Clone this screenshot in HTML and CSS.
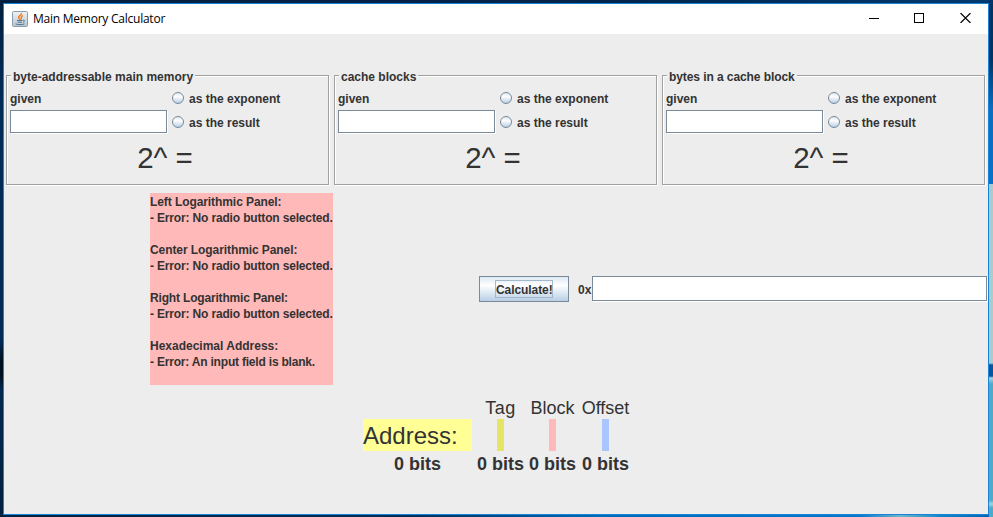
FILE: index.html
```html
<!DOCTYPE html>
<html lang="en">
<head>
<meta charset="utf-8">
<title>Main Memory Calculator</title>
<link rel="stylesheet" href="styles.css">
</head>
<body>
<div class="window">
  <header class="titlebar">
    <svg class="app-icon" width="16" height="16" viewBox="0 0 16 16">
      <defs><linearGradient id="tile" x2="0" y2="1"><stop stop-color="#eff3f6"/><stop offset="1" stop-color="#b7c5ce"/></linearGradient></defs>
      <rect x=".5" y=".5" width="15" height="15" rx="1" fill="url(#tile)" stroke="#8b9ba7"/>
      <path d="M9.500 2C10 4 6.300 4.500 6.600 6.500C7 7.500 8 8 7.800 9M10.800 4.500C8 6 10 7 8.800 8.500" fill="none" stroke="#f08122" stroke-width="1.500"/>
      <path d="M5 9.500H10.500M5.500 11.200H10M11 9.200C13.500 9 12.500 11 11 11.200M3.500 12.800C5 13.900 11 13.900 12.500 12.800" fill="none" stroke="#537591" stroke-width="1"/>
    </svg>
    <span class="title">Main Memory Calculator</span>
    <svg class="controls" width="102" height="10" viewBox="0 0 102 10" fill="none" stroke="#000" shape-rendering="crispEdges">
      <path d="M0 5.500H10M45.500 .5H54.500V9.500H45.500Z"/>
      <path d="M91.500 0L101.500 10M101.500 0L91.500 10" stroke-width="1.200" shape-rendering="auto"/>
    </svg>
  </header>
  <main>
    <div class="panels">
      <section class="panel">
        <h2 class="legend"><span>byte-addressable main memory</span></h2>
        <div class="fields">
          <label class="given">given</label>
          <label class="option"><i class="radio"></i><span>as the exponent</span></label>
          <input class="field" type="text">
          <label class="option"><i class="radio"></i><span>as the result</span></label>
        </div>
        <div class="power">2^ =</div>
      </section>
      <section class="panel">
        <h2 class="legend"><span>cache blocks</span></h2>
        <div class="fields">
          <label class="given">given</label>
          <label class="option"><i class="radio"></i><span>as the exponent</span></label>
          <input class="field" type="text">
          <label class="option"><i class="radio"></i><span>as the result</span></label>
        </div>
        <div class="power">2^ =</div>
      </section>
      <section class="panel">
        <h2 class="legend"><span class="tight">bytes in a cache block</span></h2>
        <div class="fields">
          <label class="given">given</label>
          <label class="option"><i class="radio"></i><span>as the exponent</span></label>
          <input class="field" type="text">
          <label class="option"><i class="radio"></i><span>as the result</span></label>
        </div>
        <div class="power">2^ =</div>
      </section>
    </div>
    <div class="middle">
      <div class="errors">
        <p><span class="tight">Left Logarithmic Panel:</span><br><span class="err">- Error: No radio button selected.</span></p>
        <p><span class="tight">Center Logarithmic Panel:</span><br><span class="err">- Error: No radio button selected.</span></p>
        <p><span class="tighter">Right Logarithmic Panel:</span><br><span class="err">- Error: No radio button selected.</span></p>
        <p><span>Hexadecimal Address:</span><br><span class="err-hex">- Error: An input field is blank.</span></p>
      </div>
      <div class="calc">
        <button class="button"><span>Calculate!</span></button>
        <label class="prefix">0x</label>
        <input class="field hex" type="text">
      </div>
    </div>
    <div class="address">
      <span></span>
      <span class="name tag-name">Tag</span>
      <span class="name">Block</span>
      <span class="name">Offset</span>
      <span class="addr">Address:</span>
      <i class="bar tag"></i>
      <i class="bar block"></i>
      <i class="bar offset"></i>
      <b>0 bits</b>
      <b>0 bits</b>
      <b>0 bits</b>
      <b>0 bits</b>
    </div>
  </main>
</div>
</body>
</html>
```
FILE: styles.css
```css
* { box-sizing: border-box; }
body {
  margin: 0;
  padding: 3px 0 0 3px;
  width: 993px;
  height: 517px;
  overflow: hidden;
  font: bold 12px/16px "Liberation Sans", Arial, sans-serif;
  color: #333;
  background:
    linear-gradient(#003566 0 60px, #0d6fc0 110px, #0871c8 184px, #a8cdd0 184px, #a8cdd0 363px, #06559d 365px, #06559d 376px, #a8d4dc 378px, #4fa9c8 384px, #4fa9c8 500px, #a8d4dc 504px, #4fa9c8 508px) right / 4px 100% no-repeat,
    linear-gradient(90deg, #01203f 0, #01244a 600px, #003a70) top / 100% 3px no-repeat,
    linear-gradient(90deg, #00213f 0, #002b55 400px, #006bb5 600px, #0878c8 860px, #70b5cc 900px, #1287c8 940px, #0561b0) bottom / 100% 2px no-repeat,
    linear-gradient(#001f3f 0, #002c58 100px, #002b55 340px, #001020 360px, #001020 375px, #00284e 390px, #00213f);
}
p, h2 { margin: 0; font: inherit; }
.window {
  width: 986px;
  height: 512px;
  border: 1px solid #1883d7;
  background: #ededed;
}
.titlebar {
  display: flex;
  align-items: center;
  height: 30px;
  padding: 0 17px 0 8px;
  background: #fff;
}
.app-icon { margin-top: -1px; }
.title {
  margin-left: 5px;
  font: 12px/16px "Open Sans", "Noto Sans", sans-serif;
  letter-spacing: -.24px;
  color: #000;
}
.controls { margin-left: auto; margin-top: -2px; }
.panels { display: flex; gap: 5px; padding: 41px 0 0 2px; }
.panel {
  width: 323px;
  height: 110px;
  border: 1px solid #a0a0a0;
  box-shadow: 1px 1px 0 #fff, inset 1px 1px 0 #fff;
}
.legend { height: 16px; margin-top: -8px; padding-left: 4px; }
.legend span {
  display: inline-block;
  height: 16px;
  padding: 1px 2px 0;
  background: #ededed;
}
.tight { letter-spacing: -.08px; }
.tighter { letter-spacing: -.17px; }
.err { letter-spacing: -.16px; }
.err-hex { letter-spacing: -.2px; }
.fields {
  display: grid;
  grid-template-columns: 157px 1fr;
  grid-template-rows: 24px 24px;
  column-gap: 5px;
  align-items: center;
  margin: 3px 0 0 3px;
}
.fields .field { align-self: start; margin-top: -1px; }
.option { display: flex; align-items: center; gap: 5px; }
.radio {
  width: 12px;
  height: 12px;
  margin-top: -2px;
  border: 1px solid #7a8a99;
  border-radius: 50%;
  background: linear-gradient(#dce8f3, #fff 35%, #b8cfe5);
}
.field {
  display: block;
  width: 157px;
  height: 23px;
  padding: 0 2px;
  border: 1px solid #7a8a99;
  border-radius: 0;
  outline: 0;
  background: #fff;
  box-shadow: 1px 1px 0 #fff;
}
.power {
  margin: 6px 5px 0 0;
  text-align: center;
  font-weight: normal;
  font-size: 29.5px;
  line-height: 34px;
}
.middle { display: flex; align-items: center; margin-top: 8px; height: 192px; }
.errors { width: 183px; height: 192px; margin-left: 146px; background: #ffb9b9; white-space: nowrap; padding-top: 1px; }
.errors p { height: 48px; }
.calc { display: flex; align-items: center; margin-left: 146px; }
.button {
  width: 90px;
  height: 26px;
  padding: 0;
  border: 1px solid #7a8a99;
  background: linear-gradient(#dde8f3, #fff 35%, #b8cfe5);
  font: inherit;
  color: inherit;
}
.button span { display: block; width: 58px; height: 18px; line-height: 18px; margin: 0 auto; border: 1px solid #a3b8cc; letter-spacing: -.08px; white-space: nowrap; }
.prefix { width: 14px; margin: 2px 0 0 9px; }
.hex { width: 395px; height: 25px; margin-top: -1px; }
.address {
  display: grid;
  grid-template-columns: 109px 47px 47px 49px;
  grid-template-rows: 22px 32px 26px;
  column-gap: 5px;
  justify-items: center;
  align-items: center;
  margin: 12px 0 0 359px;
  white-space: nowrap;
}
.name { font-size: 18px; font-weight: normal; }
.tag-name { letter-spacing: .5px; }
.addr { width: 109px; height: 32px; line-height: 34px; font-size: 24px; font-weight: normal; background: #ffff96; }
.bar { width: 7px; height: 32px; }
.tag { background: #e6e463; }
.block { background: #ffb9b9; }
.offset { background: #a9c6ff; }
.address b { font-size: 18px; line-height: 20px; }
```
